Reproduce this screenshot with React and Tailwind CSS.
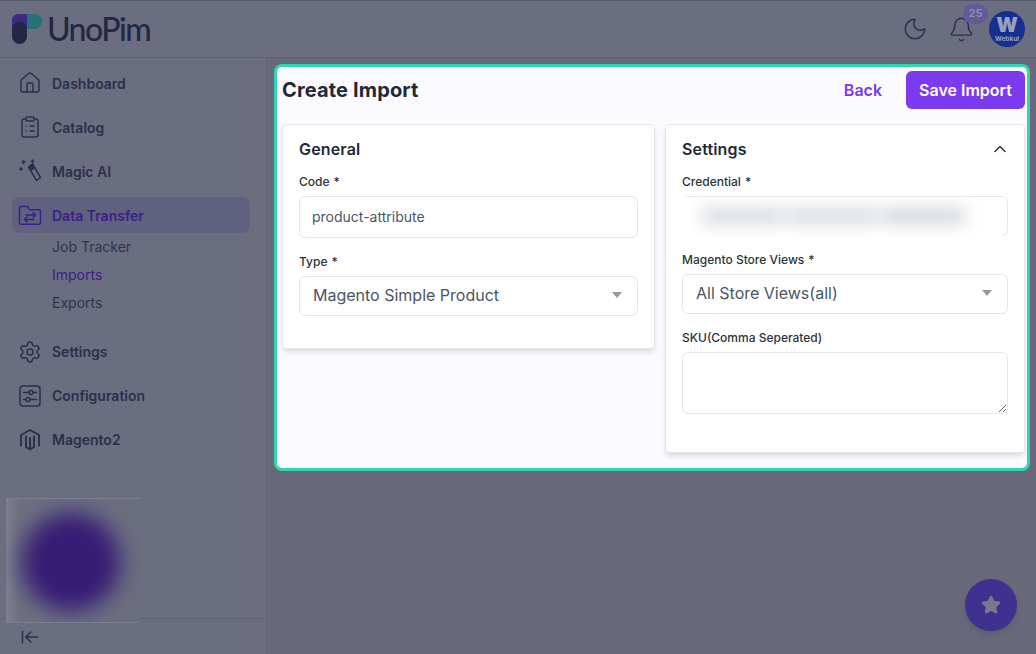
import React from 'react'
import { ArrowLeftToLine, Bell, ChevronUp, ClipboardList, House, Moon, Settings, Star } from 'lucide-react'

const TransferIcon = (props) => (
  <svg viewBox="0 0 24 24" fill="none" stroke="currentColor" strokeLinecap="round" strokeLinejoin="round" {...props}>
    <path d="M1.500 4.500v15.500a1.200 1.200 0 0 0 1.200 1.200h18.600a1.200 1.200 0 0 0 1.200-1.200V8a1.200 1.200 0 0 0-1.200-1.200h-9.800L9.500 3.500H2.500a1 1 0 0 0-1 1z" />
    <path d="M8 12h9.500M15 9.500l2.500 2.500-2.500 2.500M16 16.500H6.500M9 14l-2.500 2.500L9 19" />
  </svg>
)

const WandIcon = (props) => (
  <svg viewBox="0 0 24 24" fill="none" stroke="currentColor" strokeLinecap="round" strokeLinejoin="round" {...props}>
    <path d="M10.500 8l4-3 8 13.500-4 3z" />
    <path d="M10.500 8l4-3 2 3.500-4 3z" fill="currentColor" />
    <path d="M5.500 1.500v3M4 3h3M14.500 1v2.500M13.200 2.200h2.600M3 8.800v2.400M1.800 10h2.400" />
  </svg>
)

const ConfigIcon = (props) => (
  <svg viewBox="0 0 24 24" fill="none" stroke="currentColor" strokeLinecap="round" {...props}>
    <rect x="2" y="2" width="20" height="20" rx="3" />
    <path d="M5.500 8.500h5M15.500 8.500h3M5.500 15.500h2M12.500 15.500h6" />
    <circle cx="13" cy="8.500" r="2" />
    <circle cx="10" cy="15.500" r="2" />
  </svg>
)

const MagentoIcon = (props) => (
  <svg viewBox="0 0 24 24" fill="none" stroke="currentColor" strokeLinejoin="round" strokeLinecap="round" {...props}>
    <path d="M3 17.500V7L12 2l9 5v10.500" strokeWidth="1.900" />
    <path d="M8 19V8.500M16 19V8.500M8 19l4 2.500 4-2.500M12 10v11.500" strokeWidth="1.900" />
  </svg>
)

const Caret = () => (
  <svg viewBox="0 0 10 6" className="h-[6px] w-[10px] fill-[#999999]">
    <path d="M0 0h10L5 6z" />
  </svg>
)

const NavItem = ({ icon: Icon, label, active, low }) => (
  <div className={`flex h-9 items-center gap-2.5 rounded-lg pl-1.5 text-sm font-semibold ${active ? 'bg-[#60607f] text-[#3a2087]' : 'text-[#2b2f4b]'}`}>
    <Icon className="size-6" strokeWidth={1.5} />
    <span className={low ? 'pt-0.5' : ''}>{label}</span>
  </div>
)

const SubItem = ({ label, active }) => (
  <div className={`flex h-7 items-center pl-10 text-sm ${active ? 'text-[#3a2087]' : 'text-[#2f3350]'}`}>{label}</div>
)

const FieldLabel = ({ children, required }) => (
  <label className="flex h-4 items-center gap-1 text-xs font-medium text-[#2b3340]">
    {children}
    {required && <span>*</span>}
  </label>
)

const SelectBox = ({ value }) => (
  <div className="mt-1.5 flex h-10 items-center justify-between rounded-md border border-[#e5e7eb] bg-white pb-0.5 pl-[13px] pr-[15px] text-base text-[#4b5563]">
    <span>{value}</span>
    <Caret />
  </div>
)

const App = () => {
  return (
    <div className="relative flex h-screen flex-col overflow-hidden border-t border-[#55576a] bg-[#6b6e80] font-['Inter',sans-serif]">
      {/* Top bar */}
      <header className="flex h-[57px] shrink-0 items-center justify-between border-b border-[#5f6174] pl-3 pr-[11px]">
        <div className="flex items-center gap-[5px]">
          <svg viewBox="0 0 30 30" className="size-[30px]">
            <path d="M0 6a6 6 0 0 1 6-6h11v15H0z" fill="#3d2a86" />
            <path d="M15 0h7.500a7.500 7.500 0 0 1 0 15H15z" fill="#26717a" />
            <path d="M0 15a7.500 7.500 0 0 1 15 0v7.500a7.500 7.500 0 0 1-15 0z" fill="#232746" />
          </svg>
          <span className="font-['Lato',sans-serif] text-[32px] leading-none font-medium tracking-[-1.5px] text-[#232746]">UnoPim</span>
        </div>
        <div className="flex items-center">
          <Moon className="size-[26px] text-[#2b2f4b]" strokeWidth={1.4} />
          <div className="relative ml-5 mr-3.5">
            <Bell className="size-[27px] text-[#2b2f4b]" strokeWidth={1.3} />
            <span className="absolute -top-[12px] left-[15px] flex h-5 w-[25px] items-center justify-center rounded-full bg-[#655a98] text-[11px] font-semibold text-[#8f8fb2]">25</span>
          </div>
          <div className="flex size-9 flex-col items-center justify-center rounded-full bg-[#17308f] text-[#9a9fc0]">
            <span className="text-[20px] leading-[20px] font-black">W</span>
            <span className="text-[6.5px] leading-[8px] font-bold">Webkul</span>
          </div>
        </div>
      </header>

      <div className="flex min-h-0 flex-1">
        {/* Sidebar */}
        <aside className="flex w-[267px] shrink-0 flex-col border-r border-[#626476]">
          <nav className="flex flex-col gap-2 pl-3 pr-4 pt-[7px]">
            <NavItem icon={House} label="Dashboard" low />
            <NavItem icon={ClipboardList} label="Catalog" low />
            <NavItem icon={WandIcon} label="Magic AI" low />
            <div>
              <NavItem icon={TransferIcon} label="Data Transfer" active low />
              <SubItem label="Job Tracker" />
              <SubItem label="Imports" active />
              <SubItem label="Exports" />
            </div>
            <div className="mt-[9px] flex flex-col gap-2">
              <NavItem icon={Settings} label="Settings" />
              <NavItem icon={ConfigIcon} label="Configuration" />
              <NavItem icon={MagentoIcon} label="Magento2" />
            </div>
          </nav>
          <div className="mt-auto flex h-9 items-center border-t border-[#5f6174] pl-5">
            <ArrowLeftToLine className="size-5 text-[#2b2f4b]" strokeWidth={1.8} />
          </div>
        </aside>

        {/* Main */}
        <main className="min-w-0 flex-1 bg-[#67697b] pl-[7px] pr-1.5 pt-1.5">
          <div className="flex h-[407px] flex-col rounded-lg border-[3px] border-[#2dd8ae] bg-[#fbfbff] pl-[5px] pr-0.5">
            <div className="flex h-[42px] shrink-0 items-center justify-between pt-1">
              <h1 className="text-xl font-bold tracking-[0.15px] text-[#1f2937]">Create Import</h1>
              <div className="flex items-center gap-6">
                <a className="text-base font-semibold text-[#7c3aed]">Back</a>
                <button className="flex h-[38px] w-[119px] items-center justify-center rounded-md bg-[#7c3aed] text-base font-semibold text-white">Save Import</button>
              </div>
            </div>

            <div className="mt-[15px] flex items-start gap-[10px]">
              {/* General */}
              <section className="h-[225px] w-[373px] rounded border border-[#e5e7eb] bg-white px-4 pt-3 shadow-md">
                <h2 className="mb-[13px] text-base leading-6 font-semibold tracking-[0.15px] text-[#1f2937]">General</h2>
                <FieldLabel required>Code</FieldLabel>
                <input
                  readOnly
                  value="product-attribute"
                  className="mt-1.5 h-[42px] w-full rounded-md border border-[#e5e7eb] bg-white px-3 pb-0.5 text-sm text-[#4b5563]"
                />
                <div className="mt-4">
                  <FieldLabel required>Type</FieldLabel>
                  <SelectBox value="Magento Simple Product" />
                </div>
              </section>

              {/* Settings */}
              <section className="h-[329px] flex-1 rounded border border-[#e5e7eb] bg-white px-4 pt-3 shadow-md">
                <div className="mb-[13px] flex items-center justify-between">
                  <h2 className="text-base leading-6 font-semibold tracking-[0.15px] text-[#1f2937]">Settings</h2>
                  <ChevronUp className="-mr-0.5 size-5 text-[#1f2937]" strokeWidth={1.6} />
                </div>
                <FieldLabel required>Credential</FieldLabel>
                <div className="relative mt-1.5 h-10 rounded-md border border-[#e5e7eb] bg-white">
                  <div className="absolute -left-[3px] top-0 flex h-10 w-[322px] items-center overflow-hidden bg-white pb-[3px] pl-5">
                    <div className="flex h-5 w-[267px] blur-[8px]">
                      <div className="w-[85px] rounded-full bg-[#dde0e3]" />
                      <div className="w-[95px] rounded-full bg-[#dfe1e4]" />
                      <div className="w-[87px] rounded-full bg-[#dadde0]" />
                    </div>
                  </div>
                </div>
                <div className="mt-4">
                  <FieldLabel required>Magento Store Views</FieldLabel>
                  <SelectBox value="All Store Views(all)" />
                </div>
                <div className="mt-4">
                  <FieldLabel>SKU(Comma Seperated)</FieldLabel>
                  <textarea className="mt-1.5 block h-[62px] w-full rounded-md border border-[#e5e7eb] bg-white" />
                </div>
              </section>
            </div>
          </div>
        </main>
      </div>

      {/* Blurred block over the sidebar */}
      <div className="absolute left-[6px] top-[497px] h-[125px] w-[134px] overflow-hidden border-y border-[#7b7e8f] bg-gradient-to-r from-[#7e8090] via-[#6d7081] via-10% to-[#6b6e80]">
        <div className="absolute left-4 top-3.5 size-[98px] rounded-full bg-[#361c74] blur-[11px]" />
      </div>

      {/* Floating button */}
      <button className="absolute left-[965px] top-[578px] flex size-[52px] items-center justify-center rounded-full bg-[#40308f] shadow-md">
        <Star className="size-5 fill-[#767a8d] text-[#767a8d]" />
      </button>
    </div>
  )
}

export default App
